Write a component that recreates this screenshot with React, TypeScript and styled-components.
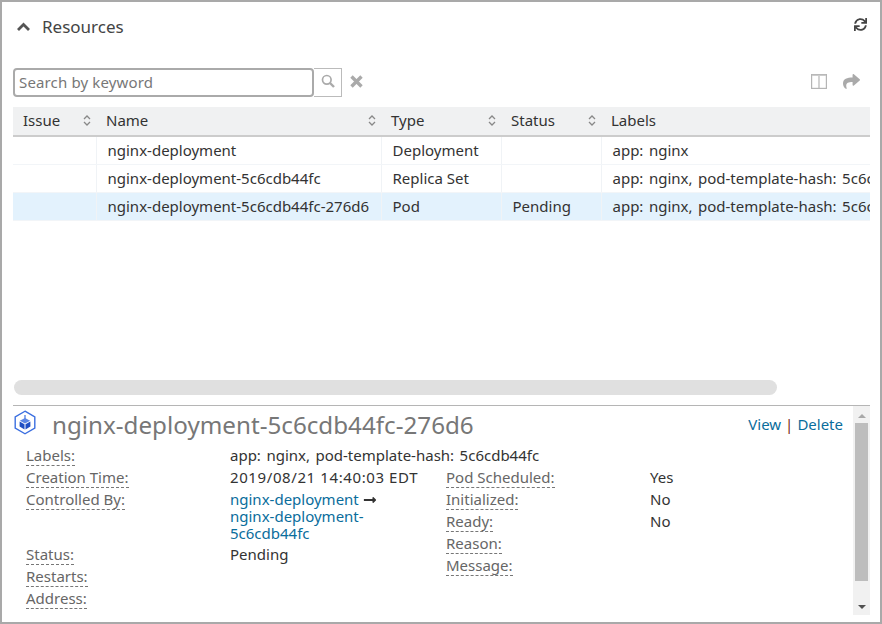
import React from "react";
import styled, { createGlobalStyle } from "styled-components";
import { FaLongArrowAltRight, FaShare, FaSync } from "react-icons/fa";

const GlobalStyle = createGlobalStyle`
  html, body {
    margin: 0;
    padding: 0;
    background: #fff;
    overflow: hidden;
  }
  body {
    font-family: "Noto Sans", Tahoma, sans-serif;
    font-size: 15px;
    color: #333;
  }
`;

const ChevronIcon = () => (
  <svg width="13" height="9" viewBox="0 0 13 9" fill="none" stroke="#555" strokeWidth="2.8">
    <path d="M1 8 6.5 2.5 12 8" />
  </svg>
);

const CloseIcon = () => (
  <svg width="13" height="13" viewBox="0 0 13 13" fill="none" stroke="#aaa" strokeWidth="3.4">
    <path d="M1.5 1.5l10 10M11.5 1.5l-10 10" />
  </svg>
);

const SortIcon = () => (
  <svg width="8" height="11" viewBox="0 0 8 11" fill="none" stroke="#888" strokeWidth="1.3">
    <path d="M1 4 4 1 7 4" />
    <path d="M1 7 4 10 7 7" />
  </svg>
);

const SearchIcon = () => (
  <svg width="14" height="14" viewBox="0 0 14 14" fill="none" stroke="#aaa">
    <circle cx="5.8" cy="5.8" r="4.3" strokeWidth="1.7" />
    <path d="M9 9l4 4" strokeWidth="2.4" />
  </svg>
);

const ColumnsIcon = () => (
  <svg width="16" height="15" viewBox="0 0 16 15" fill="none" stroke="#b5b5b5" strokeWidth="1.2">
    <rect x="0.6" y="0.6" width="14.8" height="13.8" />
    <path d="M8 1v13" />
    <path d="M1 1.4h14" stroke="#ccc" />
  </svg>
);

const PodIcon = () => (
  <svg width="22" height="25" viewBox="0 0 22 25">
    <path d="M11 1.2 20.8 6.8v11.4L11 23.8 1.2 18.2V6.8Z" fill="none" stroke="#3b6fe0" strokeWidth="1.4" />
    <path d="M11 5v4" stroke="#3b6fe0" strokeWidth="1.2" />
    <path d="M11 8 16.2 10.8 11 13.6 5.8 10.8Z" fill="#5b86e5" />
    <path d="M5.6 11.6 10.5 14.3V19.4L5.6 16.6Z" fill="#1f4fc4" />
    <path d="M16.4 11.6 11.5 14.3V19.4L16.4 16.6Z" fill="#1f4fc4" />
  </svg>
);

const rows = [
  { name: "nginx-deployment", type: "Deployment", status: "", labels: "app: nginx" },
  {
    name: "nginx-deployment-5c6cdb44fc",
    type: "Replica Set",
    status: "",
    labels: "app: nginx, pod-template-hash: 5c6cdb44fc",
  },
  {
    name: "nginx-deployment-5c6cdb44fc-276d6",
    type: "Pod",
    status: "Pending",
    labels: "app: nginx, pod-template-hash: 5c6cdb44fc",
    selected: true,
  },
];

const App: React.FC = () => (
  <Frame>
    <GlobalStyle />
    <Header>
      <Collapse>
        <ChevronIcon />
      </Collapse>
      <Heading>Resources</Heading>
      <Refresh>
        <FaSync size={13} />
      </Refresh>
    </Header>

    <Toolbar>
      <SearchInput placeholder="Search by keyword" readOnly />
      <SearchButton>
        <SearchIcon />
      </SearchButton>
      <ClearButton>
        <CloseIcon />
      </ClearButton>
      <ToolbarRight>
        <ColumnsIcon />
        <ShareButton>
          <FaShare size={17} />
        </ShareButton>
      </ToolbarRight>
    </Toolbar>

    <TableArea>
      <Table>
        <colgroup>
          <col width={83} />
          <col width={285} />
          <col width={120} />
          <col width={100} />
          <col width={400} />
        </colgroup>
        <thead>
          <tr>
            {["Issue", "Name", "Type", "Status"].map((h) => (
              <Th key={h}>
                <ThInner>
                  {h}
                  <SortIcon />
                </ThInner>
              </Th>
            ))}
            <Th>Labels</Th>
          </tr>
        </thead>
        <tbody>
          {rows.map((r) => (
            <Tr key={r.name} $selected={r.selected}>
              <Td />
              <Td>{r.name}</Td>
              <Td>{r.type}</Td>
              <Td>{r.status}</Td>
              <LabelsTd>{r.labels}</LabelsTd>
            </Tr>
          ))}
        </tbody>
      </Table>
      <HScrollThumb />
    </TableArea>

    <Detail>
      <DetailBody>
        <TitleRow>
          <PodIcon />
          <Title>nginx-deployment-5c6cdb44fc-276d6</Title>
          <Actions>
            <a>View</a>
            <Sep>|</Sep>
            <a>Delete</a>
          </Actions>
        </TitleRow>
        <LabelsRow>
          <Term>
            <span>Labels:</span>
          </Term>
          <LabelsValue>app: nginx, pod-template-hash: 5c6cdb44fc</LabelsValue>
        </LabelsRow>
        <Columns>
          <Column>
            <Row>
              <Term>
                <span>Creation Time:</span>
              </Term>
              <DateValue>2019/08/21 14:40:03 EDT</DateValue>
            </Row>
            <Row>
              <Term>
                <span>Controlled By:</span>
              </Term>
              <LinkValue>
                <a>nginx-deployment</a> <FaLongArrowAltRight size={14} color="#333" />
                <br />
                <a>nginx-deployment-</a>
                <br />
                <a>5c6cdb44fc</a>
              </LinkValue>
            </Row>
            <Row>
              <Term>
                <span>Status:</span>
              </Term>
              <Value>Pending</Value>
            </Row>
            <Row>
              <Term>
                <span>Restarts:</span>
              </Term>
            </Row>
            <Row>
              <Term>
                <span>Address:</span>
              </Term>
            </Row>
          </Column>
          <Column>
            <Row>
              <Term>
                <span>Pod Scheduled:</span>
              </Term>
              <Value>Yes</Value>
            </Row>
            <Row>
              <Term>
                <span>Initialized:</span>
              </Term>
              <Value>No</Value>
            </Row>
            <Row>
              <Term>
                <span>Ready:</span>
              </Term>
              <Value>No</Value>
            </Row>
            <Row>
              <Term>
                <span>Reason:</span>
              </Term>
            </Row>
            <Row>
              <Term>
                <span>Message:</span>
              </Term>
            </Row>
          </Column>
        </Columns>
      </DetailBody>
      <VScroll>
        <ArrowUp />
        <VTrack>
          <VThumb />
        </VTrack>
        <ArrowDown />
      </VScroll>
    </Detail>
  </Frame>
);

export default App;

// --- Styled Components ---
const Frame = styled.div`
  box-sizing: border-box;
  width: 882px;
  height: 624px;
  border: 2px solid #a9a9a9;
  padding: 0 10px 0 11px;
  display: flex;
  flex-direction: column;
  overflow: hidden;
`;

const Header = styled.div`
  display: flex;
  align-items: center;
  height: 48px;
  flex: none;
`;

const Collapse = styled.span`
  display: flex;
  margin-left: 4px;
  width: 25px;
`;

const Heading = styled.h2`
  margin: 0;
  font-size: 17px;
  font-weight: 400;
  color: #444;
`;

const Refresh = styled.span`
  display: flex;
  margin: -4px 3px 0 auto;
  color: #444;
`;

const Toolbar = styled.div`
  display: flex;
  align-items: center;
  height: 29px;
  margin-top: 18px;
  flex: none;
`;

const SearchInput = styled.input`
  box-sizing: border-box;
  width: 301px;
  height: 29px;
  padding: 0 4px 2px;
  border: 2px solid #aaa;
  border-radius: 4px;
  outline: none;
  font: inherit;
  letter-spacing: 0.15px;
  color: #333;
  &::placeholder {
    color: #777;
  }
`;

const SearchButton = styled.span`
  box-sizing: border-box;
  display: flex;
  justify-content: center;
  padding-top: 5px;
  width: 28px;
  height: 29px;
  border: 1px solid #bbb;
  border-left: none;
`;

const ClearButton = styled.span`
  display: flex;
  margin: -3px 0 0 8px;
`;

const ToolbarRight = styled.div`
  display: flex;
  align-items: center;
  margin-left: auto;
  padding: 0 10px 3px 0;
`;

const ShareButton = styled.span`
  display: flex;
  margin-left: 16px;
  color: #aaa;
`;

const TableArea = styled.div`
  position: relative;
  flex: none;
  width: 857px;
  height: 298px;
  margin-top: 10px;
  overflow: hidden;
  border-bottom: 1px solid #b5b5b5;
`;

const Table = styled.table`
  table-layout: fixed;
  width: 988px;
  border-collapse: collapse;
  line-height: 20px;
`;

const Th = styled.th`
  height: 26px;
  padding: 0 5px 2px 10px;
  background: #f0f1f2;
  border-bottom: 2px solid #ccc;
  font-weight: 400;
  text-align: left;
  color: #333;
`;

const ThInner = styled.div`
  display: flex;
  align-items: center;
  justify-content: space-between;
`;

const Tr = styled.tr<{ $selected?: boolean }>`
  background: ${(p) => (p.$selected ? "#e3f2fd" : "#fff")};
`;

const Td = styled.td`
  height: 25px;
  padding: 0 11px 2px;
  border-bottom: 1px solid #f2f5f8;
  border-right: 1px solid #f0f3f6;
  white-space: nowrap;
  overflow: hidden;
  color: #333;
`;

const LabelsTd = styled(Td)`
  word-spacing: 1.6px;
`;

const HScrollThumb = styled.div`
  position: absolute;
  left: 1px;
  top: 273px;
  width: 763px;
  height: 15px;
  border-radius: 8px;
  background: #e0e0e0;
`;

const Detail = styled.div`
  flex: 1;
  display: flex;
  width: 857px;
  padding-bottom: 7px;
  min-height: 0;
`;

const DetailBody = styled.div`
  flex: 1;
  min-width: 0;
`;

const TitleRow = styled.div`
  display: flex;
  align-items: flex-start;
  height: 38px;
  padding: 4px 10px 0 1px;
  box-sizing: border-box;
`;

const Title = styled.div`
  margin-left: 16px;
  font-size: 24.2px;
  line-height: 30px;
  color: #777;
`;

const Actions = styled.div`
  margin-left: auto;
  padding-top: 4px;
  color: #0a6d9c;
  a {
    color: #0a6d9c;
  }
`;

const Sep = styled.span`
  margin: 0 4px;
  color: #7a2a1a;
`;

const LabelsRow = styled.div`
  display: flex;
  height: 22px;
  padding-left: 13px;
  line-height: 22px;
`;

const Columns = styled.div`
  display: grid;
  grid-template-columns: 420px 1fr;
  padding-left: 13px;
`;

const Column = styled.div`
  display: flex;
  flex-direction: column;
`;

const Row = styled.div`
  display: flex;
  min-height: 22px;
  line-height: 22px;
`;

const Term = styled.div`
  flex: none;
  width: 204px;
  color: #666;
  span {
    border-bottom: 1px dashed #777;
  }
`;

const Value = styled.div`
  color: #333;
`;

const LabelsValue = styled(Value)`
  word-spacing: 1.6px;
`;

const DateValue = styled(Value)`
  letter-spacing: 0.6px;
`;

const LinkValue = styled.div`
  padding: 3px 0 1px;
  line-height: 17px;
  a {
    display: inline-block;
    color: #0a6d9c;
  }
  svg {
    vertical-align: -2px;
  }
`;

const VScroll = styled.div`
  flex: none;
  width: 17px;
  display: flex;
  flex-direction: column;
  background: #f1f1f1;
`;

const VTrack = styled.div`
  flex: 1;
  padding: 0 2px;
  margin-top: 2px;
`;

const VThumb = styled.div`
  height: 158px;
  margin-top: 3px;
  background: #bdbdbd;
`;

const ArrowUp = styled.div`
  flex: none;
  align-self: center;
  margin-top: 8px;
  width: 0;
  height: 0;
  border-left: 4px solid transparent;
  border-right: 4px solid transparent;
  border-bottom: 4px solid #a8a8a8;
`;

const ArrowDown = styled.div`
  flex: none;
  align-self: center;
  margin-bottom: 6px;
  width: 0;
  height: 0;
  border-left: 4px solid transparent;
  border-right: 4px solid transparent;
  border-top: 4px solid #505050;
`;
